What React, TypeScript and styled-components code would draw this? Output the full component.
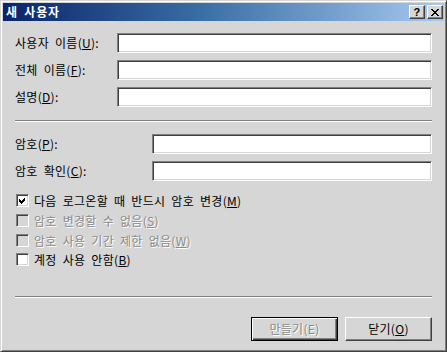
import styled, { createGlobalStyle, css } from "styled-components";

const GlobalStyle = createGlobalStyle`
  html, body {
    margin: 0;
    padding: 0;
    background: #d6d6d6;
  }
  body {
    font-family: "Noto Sans CJK KR", "Noto Sans", sans-serif;
    font-size: 12px;
    color: #000;
    word-spacing: 3px;
    letter-spacing: 0.3px;
  }
`;

const Window = styled.div`
  width: 447px;
  height: 352px;
  box-sizing: border-box;
  background: #d6d6d6;
  border: 1px solid;
  border-color: #d6d6d6 #404040 #404040 #d6d6d6;
  box-shadow: inset 1px 1px #fff, inset -1px -1px #808080;
  padding: 2px;
  display: flex;
  flex-direction: column;
`;

const TitleBar = styled.div`
  height: 18px;
  display: flex;
  align-items: center;
  padding: 0 1px 0 3px;
  background: linear-gradient(90deg, #0a246a 0%, #3a6ea5 45%, #a6caf0 100%);
`;

const Title = styled.span`
  flex: 1;
  color: #fff;
  font-weight: bold;
  font-size: 12px;
  line-height: 18px;
  letter-spacing: 0.8px;
`;

const CaptionButton = styled.div`
  width: 16px;
  height: 14px;
  box-sizing: border-box;
  margin-left: 2px;
  background: #d6d6d6;
  border: 1px solid;
  border-color: #fff #404040 #404040 #fff;
  box-shadow: inset -1px -1px #808080;
  display: flex;
  align-items: center;
  justify-content: center;
  font-family: "Liberation Sans", sans-serif;
  font-weight: bold;
  font-size: 11px;
  line-height: 1;
`;

const Body = styled.div`
  flex: 1;
  display: flex;
  flex-direction: column;
  padding: 12px 12px 0 12px;
`;

const FieldGrid = styled.div<{ $labelWidth: number }>`
  display: grid;
  grid-template-columns: ${(p) => p.$labelWidth}px 1fr;
  grid-auto-rows: 20px;
  row-gap: 7px;
  align-items: center;
`;

const Label = styled.label`
  white-space: nowrap;
  line-height: 20px;
`;

const Key = styled.span`
  text-decoration: underline;
`;

const TextBox = styled.div`
  height: 20px;
  box-sizing: border-box;
  background: #fff;
  border: 1px solid;
  border-color: #808080 #fff #fff #808080;
  box-shadow: inset 1px 1px #404040, inset -1px -1px #d6d6d6;
`;

const Separator = styled.div<{ $top: number; $bottom: number }>`
  height: 0;
  border-top: 1px solid #808080;
  border-bottom: 1px solid #fff;
  margin: ${(p) => p.$top}px 0 ${(p) => p.$bottom}px;
`;

const CheckList = styled.div`
  display: flex;
  flex-direction: column;
  margin-top: 10px;
`;

const CheckRow = styled.div<{ $disabled?: boolean }>`
  height: 19.67px;
  display: flex;
  align-items: center;
  padding-left: 1px;
  gap: 5px;
  white-space: nowrap;
  ${(p) =>
    p.$disabled &&
    css`
      color: #8a8a8a;
      text-shadow: 1px 1px 0 #fff;
    `}
`;

const Box = styled.div<{ $disabled?: boolean }>`
  width: 13px;
  height: 13px;
  box-sizing: border-box;
  background: ${(p) => (p.$disabled ? "#d6d6d6" : "#fff")};
  border: 1px solid;
  border-color: #808080 #fff #fff #808080;
  box-shadow: inset 1px 1px #404040, inset -1px -1px #d6d6d6;
  display: flex;
  flex-shrink: 0;
`;

const ButtonRow = styled.div`
  display: flex;
  justify-content: flex-end;
  gap: 7px;
`;

const Button = styled.div<{ $default?: boolean; $disabled?: boolean }>`
  width: 87px;
  height: 24px;
  box-sizing: border-box;
  background: #d6d6d6;
  display: flex;
  align-items: center;
  justify-content: center;
  line-height: 1;
  border: 1px solid;
  border-color: #fff #404040 #404040 #fff;
  box-shadow: inset -1px -1px #808080;
  ${(p) =>
    p.$default &&
    css`
      border-color: #000;
      box-shadow: inset 1px 1px #fff, inset -1px -1px #404040,
        inset -2px -2px #808080;
    `}
  ${(p) =>
    p.$disabled &&
    css`
      color: #8a8a8a;
      text-shadow: 1px 1px 0 #fff;
    `}
`;

function Check({ checked, disabled }: { checked?: boolean; disabled?: boolean }) {
  return (
    <Box $disabled={disabled}>
      {checked && (
        <svg width="11" height="11" viewBox="0 0 11 11" shapeRendering="crispEdges">
          <path d="M2 4 L4 6 L8 2 L8 5 L4 9 L2 7 Z" fill="#000" />
        </svg>
      )}
    </Box>
  );
}

const checks = [
  { text: "다음 로그온할 때 반드시 암호 변경", key: "M", checked: true },
  { text: "암호 변경할 수 없음", key: "S", disabled: true },
  { text: "암호 사용 기간 제한 없음", key: "W", disabled: true },
  { text: "계정 사용 안함", key: "B" },
];

export default function App() {
  return (
    <>
      <GlobalStyle />
      <Window>
        <TitleBar>
          <Title>새 사용자</Title>
          <CaptionButton>?</CaptionButton>
          <CaptionButton>
            <svg width="8" height="7" viewBox="0 0 8 7" shapeRendering="crispEdges">
              <path
                d="M0 0h2v1h1v1h2v-1h1v-1h2v1h-1v1h-1v1h-1v1h1v1h1v1h1v1h-2v-1h-1v-1h-2v1h-1v1h-2v-1h1v-1h1v-1h1v-1h-1v-1h-1v-1h-1z"
                fill="#000"
              />
            </svg>
          </CaptionButton>
        </TitleBar>
        <Body>
          <FieldGrid $labelWidth={102}>
            <Label>
              사용자 이름(<Key>U</Key>):
            </Label>
            <TextBox />
            <Label>
              전체 이름(<Key>F</Key>):
            </Label>
            <TextBox />
            <Label>
              설명(<Key>D</Key>):
            </Label>
            <TextBox />
          </FieldGrid>
          <Separator $top={13} $bottom={12} />
          <FieldGrid $labelWidth={137}>
            <Label>
              암호(<Key>P</Key>):
            </Label>
            <TextBox />
            <Label>
              암호 확인(<Key>C</Key>):
            </Label>
            <TextBox />
          </FieldGrid>
          <CheckList>
            {checks.map((c) => (
              <CheckRow key={c.key} $disabled={c.disabled}>
                <Check checked={c.checked} disabled={c.disabled} />
                <span>
                  {c.text}(<Key>{c.key}</Key>)
                </span>
              </CheckRow>
            ))}
          </CheckList>
          <Separator $top={26} $bottom={19} />
          <ButtonRow>
            <Button $default $disabled>
              만들기(E)
            </Button>
            <Button>
              닫기(<Key>O</Key>)
            </Button>
          </ButtonRow>
        </Body>
      </Window>
    </>
  );
}
